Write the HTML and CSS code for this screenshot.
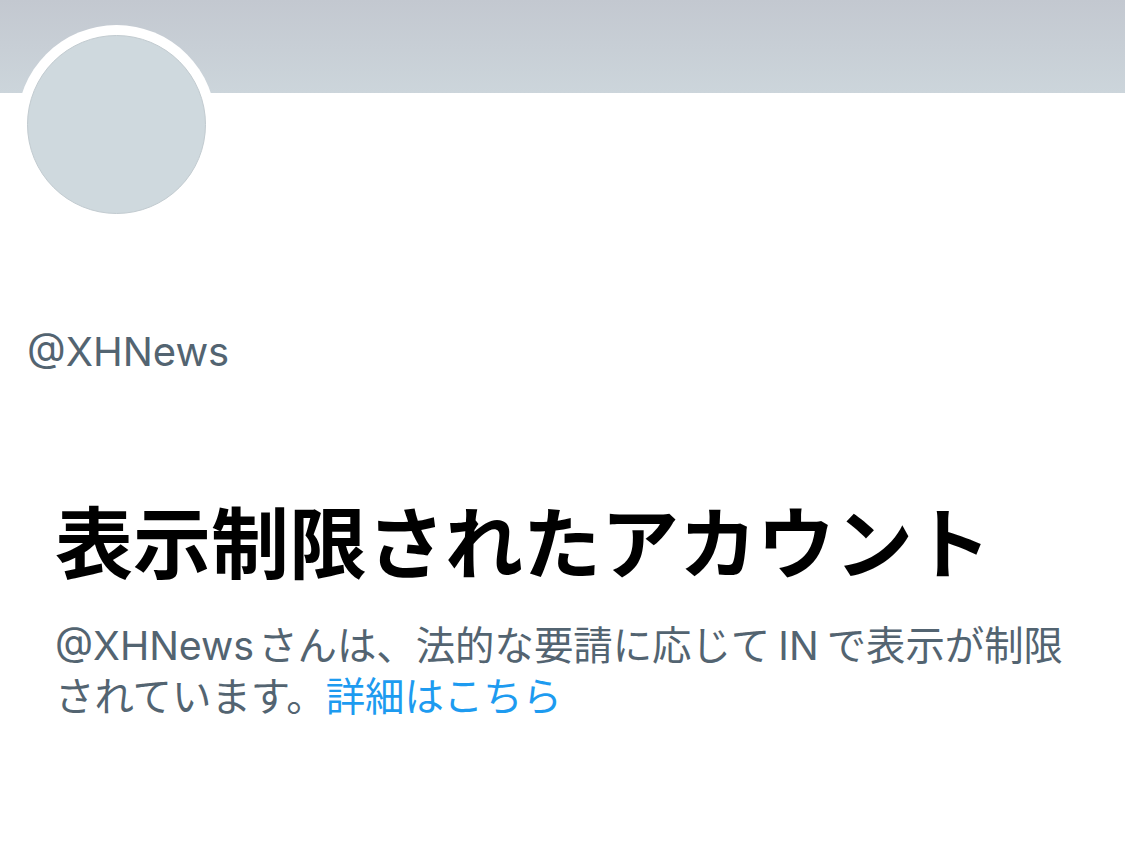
FILE: index.html
```html
<!DOCTYPE html>
<html lang="ja">
<head>
    <meta charset="UTF-8">
    <meta name="viewport" content="width=device-width, initial-scale=1.0">
    <title>@XHNews</title>
    <link rel="stylesheet" href="styles.css">
</head>
<body>
    <div class="profile">
        <div class="profile-banner"></div>

        <div class="profile-avatar">
            <div class="avatar-image"></div>
        </div>

        <div class="profile-handle">@XHNews</div>

        <div class="withheld-notice">
            <h1 class="withheld-title">表示制限されたアカウント</h1>
            <p class="withheld-text"><span class="mention">@XHNews</span>さんは、法的な要請に応じて IN で表示が制限されています。<a class="withheld-link" href="#">詳細はこちら</a></p>
        </div>
    </div>
</body>
</html>
```

FILE: styles.css
```css
* {
    margin: 0;
    padding: 0;
    box-sizing: border-box;
}

body {
    font-family: Inter, 'Noto Sans CJK JP', sans-serif;
    background: white;
    color: #0f1419;
}

.profile {
    display: flex;
    flex-direction: column;
}

.profile-banner {
    height: 93px;
    background: linear-gradient(180deg, #c3c8d0 0%, #ccd5db 100%);
}

.profile-avatar {
    width: 199px;
    height: 199px;
    margin-top: -68px;
    margin-left: 17px;
    border-radius: 50%;
    background: white;
    padding: 10px;
}

.avatar-image {
    width: 100%;
    height: 100%;
    border-radius: 50%;
    background: #cfd9de;
    border: 1px solid #c2cbd0;
}

.profile-handle {
    margin-top: 104px;
    padding-left: 27px;
    font-size: 40px;
    line-height: 48px;
    color: #536471;
}

.withheld-notice {
    padding: 0 35px 0 55px;
    margin-top: 122px;
}

.withheld-title {
    font-size: 78px;
    font-weight: 700;
    line-height: 94px;
    color: #000;
}

.withheld-text {
    margin-top: 29px;
    font-size: 39.4px;
    line-height: 51px;
    word-spacing: -3px;
    color: #536471;
}

.mention {
    margin-right: 4px;
}

.withheld-link {
    color: #1d9bf0;
    text-decoration: none;
}
```
